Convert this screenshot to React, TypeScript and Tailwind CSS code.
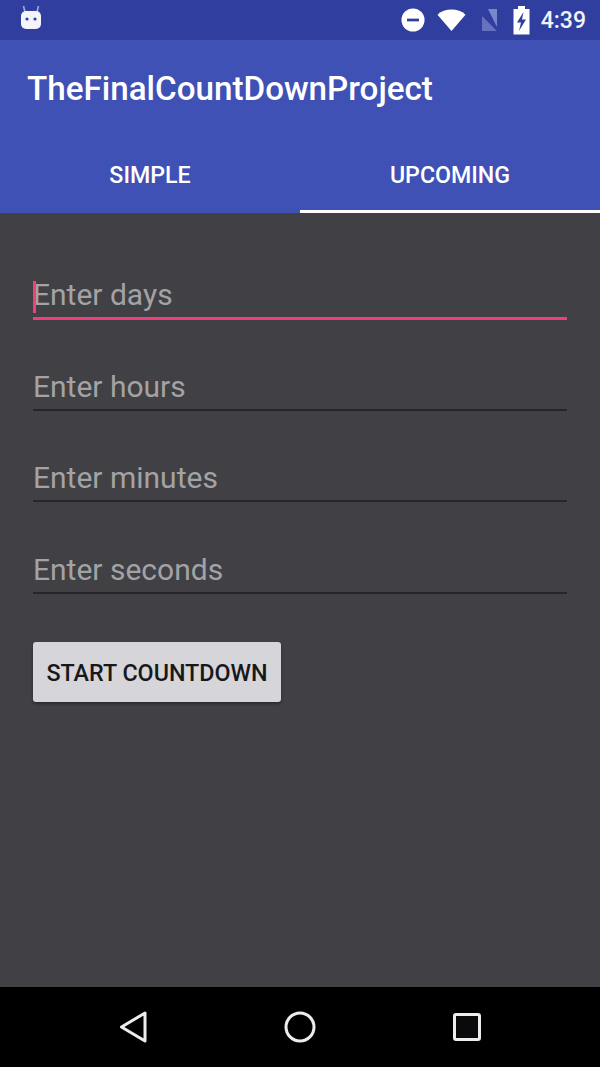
import React from "react";

function StatusBar() {
  return (
    <div className="flex h-[40px] items-center justify-between bg-[#303f9f] pl-[20px] pr-[14px]">
      <svg width="22" height="26" viewBox="0 0 22 26" className="mb-[4px]">
        <path d="M5 7 L3.5 1 M17 7 L18.5 1" stroke="#9fa8da" strokeWidth="1.6" fill="none" />
        <rect x="1" y="6" width="20" height="18" rx="5" fill="#f4f4fa" />
        <circle cx="7" cy="14" r="1.6" fill="#303f9f" />
        <circle cx="15" cy="14" r="1.6" fill="#303f9f" />
      </svg>
      <div className="flex items-center">
        <svg width="24" height="24" viewBox="0 0 26 26">
          <circle cx="13" cy="13" r="12.5" fill="#fff" />
          <rect x="6.5" y="11.5" width="13" height="3" fill="#303f9f" />
        </svg>
        <svg width="29" height="24" viewBox="0 0 30 24" className="ml-[12px]">
          <path d="M0.5 6.5 C8 -0.5 22 -0.5 29.5 6.5 L15 23.5 Z" fill="#fff" />
        </svg>
        <svg width="22" height="24" viewBox="0 0 22 24" className="ml-[11px]">
          <path d="M11 1 H20 V19 Z" fill="#7986cb" />
          <path d="M1 4 L20 23 H5 V8 Z" fill="#6572bd" />
          <path d="M2 1 L21 23" stroke="#303f9f" strokeWidth="1.5" />
        </svg>
        <svg width="17" height="29" viewBox="0 0 17 29" className="ml-[14px]">
          <path d="M5 0 H12 V3 H16.5 V28.5 H0.5 V3 H5 Z" fill="#fff" />
          <path d="M10.5 6 L4 16.5 H8 L6 25 L13 13.5 H9 Z" fill="#303f9f" />
        </svg>
        <span className="ml-[11px] font-['Roboto',sans-serif] text-[23px] leading-none font-medium text-[#f1f2fa]">
          4:39
        </span>
      </div>
    </div>
  );
}

function Tabs() {
  return (
    <div className="flex h-[77px] bg-[#3f51b5] font-['Roboto',sans-serif] text-[23.2px] font-medium text-white">
      <div className="flex flex-1 items-start justify-center pt-[22px]">SIMPLE</div>
      <div className="flex flex-1 items-start justify-center border-b-[3px] border-white pt-[22px]">
        UPCOMING
      </div>
    </div>
  );
}

function Field({ label, active }: { label: string; active?: boolean }) {
  return (
    <div
      className={
        active
          ? "relative -mb-px h-[51px] border-b-[3px] border-[#f13f7e] pt-[6px]"
          : "relative h-[50px] border-b-[2px] border-[#26252a] pt-[6px]"
      }
    >
      {active && <div className="absolute top-[12px] left-0 h-[32px] w-[3px] bg-[#f13f7e]" />}
      <span className="block text-[30px] leading-[40px] text-[#a3a3a5]">{label}</span>
    </div>
  );
}

export default function App() {
  return (
    <div className="flex h-[1067px] w-[600px] flex-col bg-[#414045] font-['Roboto',sans-serif]">
      <StatusBar />
      <div className="flex h-[96px] items-center bg-[#3f51b5] pt-[1px] pl-[27px] text-[33.2px] font-medium text-white">
        TheFinalCountDownProject
      </div>
      <Tabs />
      <div className="flex flex-1 flex-col px-[33px] pt-[56px]">
        <div className="flex flex-col gap-[41.7px]">
          <Field label="Enter days" active />
          <Field label="Enter hours" />
          <Field label="Enter minutes" />
          <Field label="Enter seconds" />
        </div>
        <button className="mt-[48px] h-[60px] w-[248px] rounded-[3px] bg-[#d6d5d9] pt-[2px] text-[23.3px] font-medium text-[#18181a] shadow-[0_2px_3px_rgba(0,0,0,0.35)]">
          START COUNTDOWN
        </button>
      </div>
      <div className="flex h-[80px] items-center justify-between bg-black pr-[119px] pl-[119px]">
        <svg width="28" height="32" viewBox="0 0 28 32">
          <path d="M26 2 V30 L2.5 16 Z" fill="none" stroke="#ededed" strokeWidth="3" strokeLinejoin="round" />
        </svg>
        <svg width="32" height="32" viewBox="0 0 32 32">
          <circle cx="16" cy="16" r="14" fill="none" stroke="#ededed" strokeWidth="3" />
        </svg>
        <svg width="28" height="28" viewBox="0 0 28 28">
          <rect x="1.5" y="1.5" width="25" height="25" rx="1.5" fill="#0a0a0c" stroke="#ededed" strokeWidth="3" />
        </svg>
      </div>
    </div>
  );
}
